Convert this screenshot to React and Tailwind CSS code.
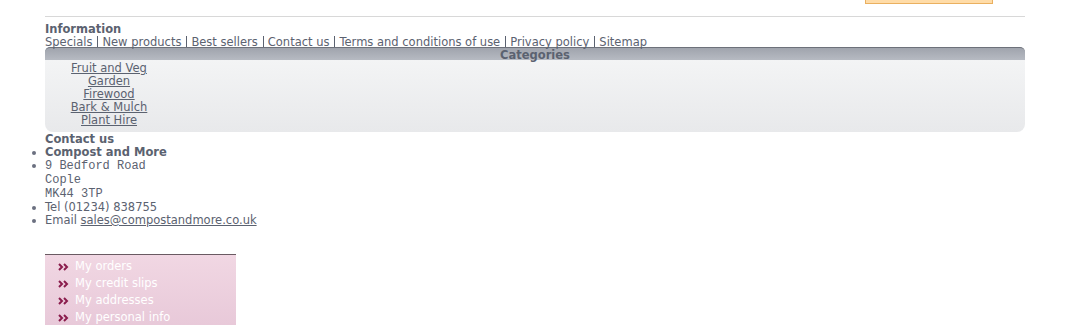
function Bullet() {
  return <span className="absolute left-[-13px] top-[5px] w-[4px] h-[4px] rounded-full bg-[#6b7080]" />;
}

function Chevrons() {
  return (
    <svg width="11" height="8" viewBox="0 0 11 8" className="mr-[6px]">
      <path d="M1 1 L4 4 L1 7" fill="none" stroke="#8a1c4c" strokeWidth="2" />
      <path d="M6 1 L9 4 L6 7" fill="none" stroke="#8a1c4c" strokeWidth="2" />
    </svg>
  );
}

export default function App() {
  const info = ["Specials", "New products", "Best sellers", "Contact us", "Terms and conditions of use", "Privacy policy", "Sitemap"];
  const cats = ["Fruit and Veg", "Garden", "Firewood", "Bark & Mulch", "Plant Hire"];
  const acct = ["My orders", "My credit slips", "My addresses", "My personal info"];
  return (
    <div className="w-[1089px] h-[336px] bg-white overflow-hidden text-[#5b6270] text-[11.5px] leading-[13px]" style={{ fontFamily: '"DejaVu Sans", Verdana, sans-serif' }}>
      <div className="flex">
        <div className="ml-[865px] w-[128px] h-[4px] bg-[#ffdca8] border-x border-b border-[#eab060]" />
      </div>
      <div className="ml-[45px] w-[980px]">
        <div className="mt-[12px] h-px bg-[#d8d8d8]" />
        <div className="mt-[6px] font-bold h-[13px]">Information</div>
        <div className="flex h-[11px]">
          {info.map((t, i) => (
            <span key={t} className={(i > 0 ? "border-l border-[#5b6270] pl-[4px] " : "") + (i < info.length - 1 ? "pr-[5px]" : "")}>{t}</span>
          ))}
        </div>
        <div>
          <div className="h-[13px] rounded-t-[5px] border-t border-[#6d717a] bg-gradient-to-b from-[#a0a4ad] to-[#b6bac2] text-center font-bold leading-[14px] text-[#5b6270]">Categories</div>
          <div className="h-[72px] bg-gradient-to-b from-[#f3f4f5] to-[#e8e9eb] rounded-b-[8px] pt-[2px]">
            <div className="w-[128px] flex flex-col items-center">
              {cats.map((c) => (
                <a key={c} className="underline">{c}</a>
              ))}
            </div>
          </div>
        </div>
        <div className="mt-[1px] font-bold">Contact us</div>
        <div>
          <div className="relative font-bold"><Bullet />Compost and More</div>
          <div className="relative leading-[14px] text-[12px]" style={{ fontFamily: '"Liberation Mono", monospace' }}>
            <Bullet />
            9 Bedford Road<br />Cople<br />MK44 3TP
          </div>
          <div className="relative"><Bullet />Tel (01234) 838755</div>
          <div className="relative"><Bullet />Email <a className="underline">sales@compostandmore.co.uk</a></div>
        </div>
        <div className="mt-[27px] w-[191px] border-t border-[#6a5a62] bg-gradient-to-b from-[#f1d7e3] to-[#e8c9d9] pt-[3px] h-[71px]">
          {acct.map((a) => (
            <div key={a} className="flex items-center h-[17px] pl-[13px]">
              <Chevrons />
              <span className="text-white text-[11.5px]">{a}</span>
            </div>
          ))}
        </div>
      </div>
    </div>
  );
}
